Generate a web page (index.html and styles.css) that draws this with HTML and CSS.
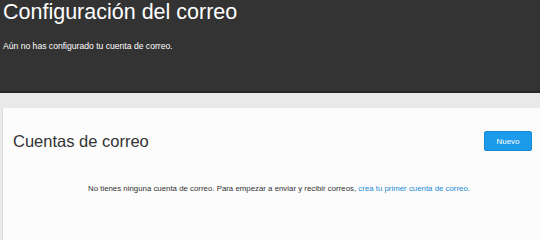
FILE: index.html
```html
<!DOCTYPE html>
<html lang="es">
<head>
  <meta charset="UTF-8" />
  <title>Configuración del correo</title>
  <link rel="stylesheet" href="styles.css">
</head>
<body>
  <header class="top">
    <h1>Configuración del correo</h1>
    <p>Aún no has configurado tu cuenta de correo.</p>
  </header>

  <main class="page">
    <section class="card">
      <div class="card-head">
        <h2>Cuentas de correo</h2>
        <button class="btn-new">Nuevo</button>
      </div>
      <p class="empty">
        No tienes ninguna cuenta de correo. Para empezar a enviar y recibir correos,
        <a href="#">crea tu primer cuenta de correo</a>.
      </p>
    </section>
  </main>
</body>
</html>
```

FILE: styles.css
```css
body {
  margin: 0;
  font-family: "Liberation Sans", Arial, sans-serif;
  background-color: #e9e9e9;
  color: #333;
  overflow: hidden;
  height: 240px;
}
.top {
  background-color: #333;
  color: #fff;
  height: 91px;
  padding: 0 3px;
  border-bottom: 2px solid #262626;
}
.top h1 {
  margin: 0;
  padding-top: 1px;
  font-size: 21.5px;
  font-weight: normal;
  line-height: 22px;
}
.top p {
  margin: 18px 0 0;
  font-size: 8.6px;
}
.page {
  padding: 15px 0 0 2px;
}
.card {
  background: #fcfcfc;
  border-left: 1px solid #ddd;
  height: 132px;
}
.card-head {
  display: flex;
  align-items: center;
  justify-content: space-between;
  padding: 23px 8px 0 10px;
}
.card-head h2 {
  margin: 0;
  font-size: 16.5px;
  font-weight: normal;
}
.btn-new {
  background: #1c9bea;
  border: 1px solid #168ad6;
  color: #fff;
  font-family: inherit;
  font-size: 8px;
  width: 48px;
  height: 20px;
  border-radius: 2px;
  cursor: pointer;
}
.empty {
  margin: 33px 0 0;
  padding-left: 15px;
  text-align: center;
  font-size: 7.85px;
  color: #333;
}
.empty a {
  color: #1a8ad4;
  text-decoration: none;
}
```
